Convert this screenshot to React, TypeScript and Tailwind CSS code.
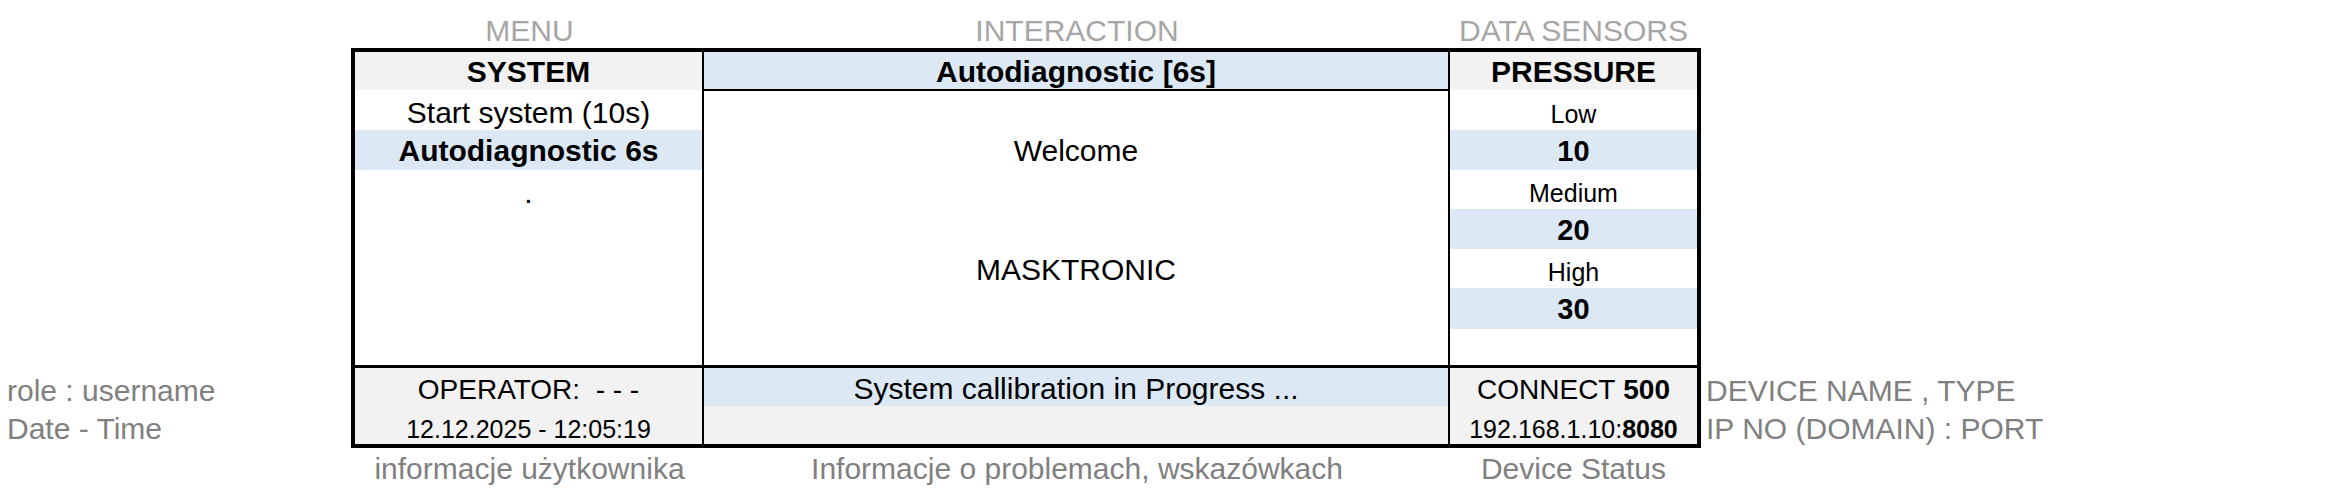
export default function App() {
  const blue = "bg-[#dde8f5]";
  const gray = "bg-[#f2f2f2]";
  return (
    <div className="w-[2339px] h-[496px] bg-white text-black font-['Liberation_Sans',Arial,sans-serif] flex flex-col overflow-hidden">
      {/* top labels */}
      <div className="h-[48px] flex items-end pl-[355px] text-[30px] leading-[34px] text-[#a6a6a6] whitespace-nowrap">
        <div className="w-[349px] text-center">MENU</div>
        <div className="w-[746px] text-center">INTERACTION</div>
        <div className="w-[247px] text-center">DATA SENSORS</div>
      </div>

      {/* main band */}
      <div className="h-[400px] flex">
        <div className="w-[351px] flex flex-col justify-end pb-[2px] pl-[7px] text-[30px] leading-[34px] text-[#808080] whitespace-nowrap">
          <div className="h-[38px] flex items-end">role : username</div>
          <div className="h-[38px] flex items-end">Date - Time</div>
        </div>

        <div className="w-[1350px] h-[400px] border-4 border-black flex flex-col">
          <div className="h-[313px] flex">
            {/* MENU column */}
            <div className="w-[349px] border-r-2 border-black flex flex-col text-[30px] leading-[34px] whitespace-nowrap">
              <div className={`h-[38px] ${gray} flex items-end justify-center pb-[1px] font-bold`}>SYSTEM</div>
              <div className="h-[40px] flex items-end justify-center">Start system (10s)</div>
              <div className={`h-[40px] ${blue} flex items-center justify-center pt-[2px] font-bold`}>Autodiagnostic 6s</div>
              <div className="h-[40px] flex items-end justify-center">.</div>
            </div>
            {/* INTERACTION column */}
            <div className="w-[746px] border-r-2 border-black flex flex-col text-[30px] leading-[34px] whitespace-nowrap">
              <div className={`h-[39px] ${blue} border-b-2 border-black flex items-end justify-center font-bold`}>Autodiagnostic [6s]</div>
              <div className="h-[39px]" />
              <div className="h-[40px] flex items-center justify-center pt-[2px]">Welcome</div>
              <div className="h-[79px]" />
              <div className="h-[39px] flex items-center justify-center pt-[2px]">MASKTRONIC</div>
            </div>
            {/* DATA SENSORS column */}
            <div className="flex-1 flex flex-col whitespace-nowrap">
              <div className={`h-[38px] ${gray} flex items-end justify-center pb-[1px] font-bold text-[30px] leading-[34px]`}>PRESSURE</div>
              <div className="h-[40px] flex items-end justify-center pb-[1px] text-[25px] leading-[29px]">Low</div>
              <div className={`h-[40px] ${blue} flex items-center justify-center pt-[2px] font-bold text-[29px] leading-[33px]`}>10</div>
              <div className="h-[39px] flex items-end justify-center pb-[1px] text-[25px] leading-[29px]">Medium</div>
              <div className={`h-[40px] ${blue} flex items-center justify-center pt-[2px] font-bold text-[29px] leading-[33px]`}>20</div>
              <div className="h-[39px] flex items-end justify-center pb-[1px] text-[25px] leading-[29px]">High</div>
              <div className={`h-[41px] ${blue} flex items-center justify-center pt-[2px] font-bold text-[29px] leading-[33px]`}>30</div>
            </div>
          </div>

          <div className="h-[3px] bg-black" />

          <div className="h-[76px] flex whitespace-nowrap">
            <div className={`w-[349px] border-r-2 border-black ${gray} flex flex-col`}>
              <div className="h-[38px] flex items-end justify-center text-[28px] leading-[32px] whitespace-pre">OPERATOR:  - - -</div>
              <div className="h-[38px] flex items-end justify-center text-[25px] leading-[29px]">12.12.2025 - 12:05:19</div>
            </div>
            <div className={`w-[746px] border-r-2 border-black ${gray} flex flex-col`}>
              <div className={`h-[38px] ${blue} flex items-end justify-center text-[30px] leading-[34px]`}>System callibration in Progress ...</div>
              <div className="h-[38px]" />
            </div>
            <div className={`flex-1 ${gray} flex flex-col`}>
              <div className="h-[38px] flex items-end justify-center text-[28px] leading-[32px]">
                <span>CONNECT&nbsp;<b>500</b></span>
              </div>
              <div className="h-[38px] flex items-end justify-center text-[25px] leading-[29px]">
                <span>192.168.1.10:<b>8080</b></span>
              </div>
            </div>
          </div>
        </div>

        <div className="flex-1 flex flex-col justify-end pb-[2px] pl-[5px] text-[30px] leading-[34px] text-[#808080] whitespace-nowrap">
          <div className="h-[38px] flex items-end">DEVICE NAME , TYPE</div>
          <div className="h-[38px] flex items-end">IP NO (DOMAIN) : PORT</div>
        </div>
      </div>

      {/* bottom labels */}
      <div className="h-[48px] flex items-start pt-[4px] pl-[355px] text-[30px] leading-[34px] text-[#808080] whitespace-nowrap">
        <div className="w-[349px] text-center">informacje użytkownika</div>
        <div className="w-[746px] text-center">Informacje o problemach, wskazówkach</div>
        <div className="w-[247px] text-center">Device Status</div>
      </div>
    </div>
  );
}
